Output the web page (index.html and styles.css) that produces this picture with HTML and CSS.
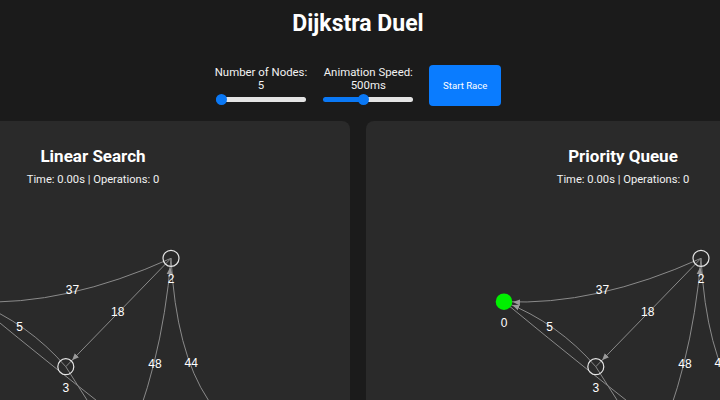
FILE: index.html
```html
<!DOCTYPE html>
<html lang="en">
<head>
<meta charset="utf-8">
<title>Dijkstra Duel</title>
<link rel="stylesheet" href="styles.css">
</head>
<body>
<header class="top">
  <h1 class="title">Dijkstra Duel</h1>
  <div class="controls">
    <label class="control">
      <span class="control-label">Number of Nodes:<br>5</span>
      <input type="range" class="slider" min="5" max="20" value="5" style="--p:0">
    </label>
    <label class="control">
      <span class="control-label">Animation Speed:<br>500ms</span>
      <input type="range" class="slider" min="100" max="1000" value="500" style="--p:0.444">
    </label>
    <button class="start-btn" type="button">Start Race</button>
  </div>
</header>
<main class="arena">
  <section class="panel">
    <h2 class="panel-title">Linear Search</h2>
    <p class="stats">Time: 0.00s | Operations: 0</p>
    <svg class="graph" width="514" height="300" viewBox="0 0 514 300">
      <defs>
        <marker id="arrowA" viewBox="0 -4 8 8" refX="16" refY="0" markerWidth="8" markerHeight="8" markerUnits="userSpaceOnUse" orient="auto">
          <path class="arrow" d="M0,-3L7,0L0,3Z"/>
        </marker>
      </defs>
      <g class="edges">
        <path d="M335,71.3 Q229.5,119 138,114.7" marker-end="url(#arrowA)"/>
        <path d="M229.8,179.7 Q192,136 138,114.7" marker-end="url(#arrowA)"/>
        <path d="M335,71.3 L229.8,179.7" marker-end="url(#arrowA)"/>
        <path d="M138,114.7 Q320,265 420,330"/>
        <path d="M229.8,179.7 L286,268" marker-end="url(#arrowA)"/>
        <path d="M286,268 Q325.5,182.5 335,71.3" marker-end="url(#arrowA)"/>
        <path d="M335,71.3 Q340,165 372.3,213 T420,330" marker-end="url(#arrowA)"/>
      </g>
      <g class="edge-labels">
        <text x="236.5" y="107">37</text>
        <text x="183.5" y="143.7">5</text>
        <text x="281.7" y="128.7">18</text>
        <text x="319" y="180.7">48</text>
        <text x="355.2" y="179.7">44</text>
      </g>
      <g class="nodes">
        <circle class="node" cx="138" cy="114.7" r="8"/>
        <circle class="node" cx="420" cy="330" r="8"/>
        <circle class="node" cx="335" cy="71.3" r="8"/>
        <circle class="node" cx="229.8" cy="179.7" r="8"/>
        <circle class="node" cx="286" cy="268" r="8"/>
      </g>
      <g class="node-labels">
        <text x="138" y="139.5">0</text>
        <text x="335" y="95.5">2</text>
        <text x="229.8" y="204.5">3</text>
      </g>
    </svg>
  </section>
  <section class="panel">
    <h2 class="panel-title">Priority Queue</h2>
    <p class="stats">Time: 0.00s | Operations: 0</p>
    <svg class="graph" width="514" height="300" viewBox="0 0 514 300">
      <defs>
        <marker id="arrowB" viewBox="0 -4 8 8" refX="16" refY="0" markerWidth="8" markerHeight="8" markerUnits="userSpaceOnUse" orient="auto">
          <path class="arrow" d="M0,-3L7,0L0,3Z"/>
        </marker>
      </defs>
      <g class="edges">
        <path d="M335,71.3 Q229.5,119 138,114.7" marker-end="url(#arrowB)"/>
        <path d="M229.8,179.7 Q192,136 138,114.7" marker-end="url(#arrowB)"/>
        <path d="M335,71.3 L229.8,179.7" marker-end="url(#arrowB)"/>
        <path d="M138,114.7 Q320,265 420,330"/>
        <path d="M229.8,179.7 L286,268" marker-end="url(#arrowB)"/>
        <path d="M286,268 Q325.5,182.5 335,71.3" marker-end="url(#arrowB)"/>
        <path d="M335,71.3 Q340,165 372.3,213 T420,330" marker-end="url(#arrowB)"/>
      </g>
      <g class="edge-labels">
        <text x="236.5" y="107">37</text>
        <text x="183.5" y="143.7">5</text>
        <text x="281.7" y="128.7">18</text>
        <text x="319" y="180.7">48</text>
        <text x="355.2" y="179.7">44</text>
      </g>
      <g class="nodes">
        <circle class="node node-start" cx="138" cy="114.7" r="8.3"/>
        <circle class="node" cx="420" cy="330" r="8"/>
        <circle class="node" cx="335" cy="71.3" r="8"/>
        <circle class="node" cx="229.8" cy="179.7" r="8"/>
        <circle class="node" cx="286" cy="268" r="8"/>
      </g>
      <g class="node-labels">
        <text x="138" y="139.5">0</text>
        <text x="335" y="95.5">2</text>
        <text x="229.8" y="204.5">3</text>
      </g>
    </svg>
  </section>
</main>
</body>
</html>
```

FILE: styles.css
```css
* {
  box-sizing: border-box;
}

html,
body {
  margin: 0;
  height: 100%;
}

body {
  padding-right: 4px;
  background: #1b1b1b;
  color: #ffffff;
  font-family: Roboto, "Liberation Sans", Arial, sans-serif;
  overflow: hidden;
}

.top {
  display: flex;
  flex-direction: column;
  align-items: center;
}

.title {
  margin: 10px 0 0;
  font-size: 23px;
  line-height: 28px;
  font-weight: 700;
}

.controls {
  display: flex;
  align-items: center;
  gap: 16px;
  margin-top: 27px;
}

.control {
  display: flex;
  flex-direction: column;
  align-items: center;
  font-size: 11.4px;
  color: #f2f2f2;
}

.control-label {
  text-align: center;
  line-height: 12.9px;
}

.slider {
  -webkit-appearance: none;
  appearance: none;
  width: 90px;
  height: 11px;
  margin: 2px 0 0;
  padding: 0;
  background: transparent;
}

.slider::-webkit-slider-runnable-track {
  height: 5px;
  border-radius: 3px;
  background: linear-gradient(to right, #0a78f5 calc(5.5px + var(--p) * 79px), #e4e4e4 0);
}

.slider::-webkit-slider-thumb {
  -webkit-appearance: none;
  appearance: none;
  width: 11px;
  height: 11px;
  margin-top: -3px;
  border: 0;
  border-radius: 50%;
  background: #0a78f5;
}

.start-btn {
  width: 72px;
  height: 41px;
  border: 0;
  border-radius: 4px;
  background: #0a7cff;
  color: #ffffff;
  font-family: Roboto, "Liberation Sans", Arial, sans-serif;
  font-size: 9.6px;
  padding: 0;
}

.arena {
  display: flex;
  justify-content: center;
  gap: 16px;
  margin-top: 15px;
}

.panel {
  flex: 0 0 514px;
  height: 340px;
  padding-top: 25px;
  background: #2a2a2a;
  border-radius: 8px;
  text-align: center;
}

.panel-title {
  margin: 0;
  font-size: 17px;
  line-height: 20px;
  font-weight: 700;
}

.stats {
  margin: 7px 0 0;
  font-size: 11.2px;
  line-height: 14px;
  color: #f2f2f2;
}

.graph {
  display: block;
}

.edges path {
  fill: none;
  stroke: #8a8a8a;
  stroke-width: 1;
}

.arrow {
  fill: #9a9a9a;
}

.node {
  fill: none;
  stroke: #e6e6e6;
  stroke-width: 1.2;
}

.node-start {
  fill: #00f000;
  stroke: none;
}

.edge-labels text,
.node-labels text {
  fill: #ffffff;
  font-family: "Liberation Sans", Arial, sans-serif;
  font-size: 12px;
  text-anchor: middle;
}
```
